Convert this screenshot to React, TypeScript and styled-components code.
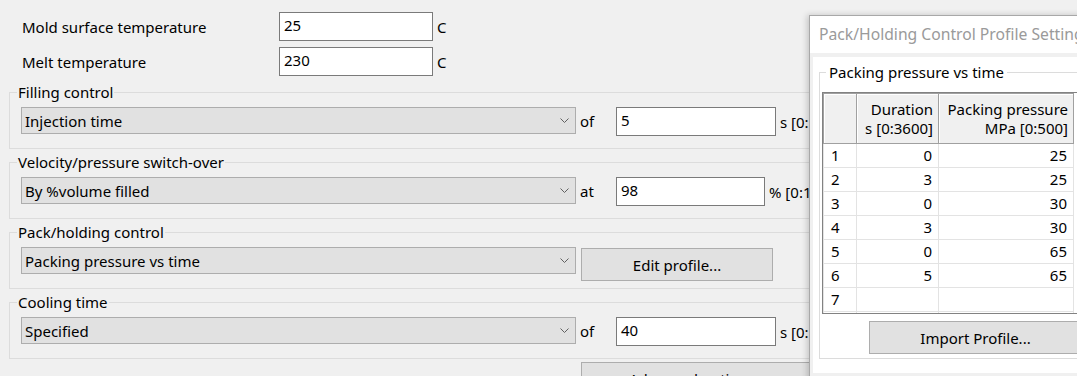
import React from "react";
import styled, {createGlobalStyle} from "styled-components";

const GlobalStyle = createGlobalStyle`
  html, body {
    margin: 0;
    padding: 0;
    background: #f0f0f0;
  }
  body {
    font-family: "Noto Sans", "Open Sans", sans-serif;
    font-size: 15px;
    color: #000;
  }
`;

const Screen = styled.div`
  position: relative;
  width: 1077px;
  height: 376px;
  overflow: hidden;
  background: #f0f0f0;
`;

const Form = styled.div`
  padding: 12px 0 0 9px;
  width: 900px;
`;

const FieldRow = styled.div`
  display: flex;
  align-items: center;
  height: 29px;
  margin-bottom: 6px;
`;

const FieldLabel = styled.div`
  width: 257px;
  padding-left: 13px;
  line-height: 30px;
`;

const TextBox = styled.div<{$w: number}>`
  box-sizing: border-box;
  width: ${(p) => p.$w}px;
  height: 29px;
  background: #fff;
  border: 1px solid #7a7a7a;
  padding: 0 0 0 4px;
  line-height: 24px;
`;

const Unit = styled.div`
  padding-left: 4px;
  line-height: 30px;
  white-space: nowrap;
`;

const GroupBox = styled.div`
  border: 1px solid #dcdcdc;
  padding: 0 0 12px 11px;
  margin-top: 16px;
  & + & {
    margin-top: 13px;
  }
`;

const GroupTitle = styled.div`
  width: fit-content;
  height: 20px;
  margin: -11px 0 5px -4px;
  padding: 0 1px;
  line-height: 21px;
  background: #f0f0f0;
`;

const ControlRow = styled.div`
  display: flex;
  align-items: flex-start;
  height: 29px;
`;

const Combo = styled.div`
  box-sizing: border-box;
  display: flex;
  align-items: center;
  justify-content: space-between;
  width: 555px;
  height: 27px;
  background: #e1e1e1;
  border: 1px solid #adadad;
  padding: 1px 6px 0 3px;
`;

const Chevron = () => (
  <svg width="9" height="6" viewBox="0 0 9 6">
    <path d="M0.5 0.5 L4.5 4.5 L8.5 0.5" fill="none" stroke="#606060" strokeWidth="1" />
  </svg>
);

const Joiner = styled.div`
  width: 36px;
  padding-left: 4px;
  line-height: 28px;
`;

const PushButton = styled.button<{$w: number}>`
  box-sizing: border-box;
  width: ${(p) => p.$w}px;
  height: 33px;
  margin: 1px 0 0 5px;
  background: #e1e1e1;
  border: 1px solid #adadad;
  font: inherit;
  color: #000;
  padding: 0;
`;

const BottomButton = styled(PushButton)`
  display: block;
  margin: 3px 0 0 572px;
`;

const Dialog = styled.div`
  position: absolute;
  left: 809px;
  top: 15px;
  width: 300px;
  height: 380px;
  background: #f0f0f0;
  border: 1px solid #a8a8a8;
  box-shadow: -2px 0 6px rgba(0, 0, 0, 0.18);
`;

const TitleBar = styled.div`
  height: 37px;
  background: #fff;
  color: #9a9a9a;
  padding-left: 9px;
  line-height: 36px;
  font-size: 15.7px;
  white-space: nowrap;
`;

const DialogBody = styled.div`
  padding: 4px 0 0 3px;
`;

const Panel = styled.div`
  background: #fff;
  height: 311px;
  padding: 5px 0 0 6px;
`;

const InnerGroup = styled.div`
  border: 1px solid #dcdcdc;
  padding: 0 0 4px 2px;
  margin-top: 10px;
`;

const InnerTitle = styled(GroupTitle)`
  background: #fff;
  margin: -11px 0 10px 4px;
  padding: 0 3px;
`;

const TableFrame = styled.div`
  box-sizing: border-box;
  height: 222px;
  overflow: hidden;
  border: 1px solid #828282;
  background: #fff;
`;

const Grid = styled.table`
  border-collapse: collapse;
  table-layout: fixed;
  width: 400px;
`;

const HeadCell = styled.th<{$w?: number}>`
  box-sizing: border-box;
  width: ${(p) => (p.$w ? `${p.$w}px` : "auto")};
  height: 48px;
  padding: 0 5px 0 0;
  background: #f0f0f0;
  border: 1px solid #a0a0a0;
  box-shadow: inset 1px 1px 0 #fff;
  font-weight: normal;
  text-align: right;
  line-height: 19px;
  white-space: nowrap;
`;

const BlankHead = styled.th`
  height: 48px;
  background: #fff;
  border: 0;
`;

const Cell = styled.td<{$left?: boolean}>`
  height: 23px;
  padding: 0 ${(p) => (p.$left ? "0 0 7px" : "6px 0 0")};
  border: 1px solid #e3e3e3;
  border-top: 0;
  text-align: ${(p) => (p.$left ? "left" : "right")};
  line-height: 23px;
`;

const FillCell = styled.td`
  border: 0;
`;

const ImportButton = styled(PushButton)`
  display: block;
  width: 213px;
  margin: 7px 0 0 47px;
`;

const rows: [string, string, string][] = [
  ["1", "0", "25"],
  ["2", "3", "25"],
  ["3", "0", "30"],
  ["4", "3", "30"],
  ["5", "0", "65"],
  ["6", "5", "65"],
  ["7", "", ""],
  ["", "", ""],
];

const groups = [
  {title: "Filling control", value: "Injection time", joiner: "of", input: "5", w: 160, unit: "s [0:100]"},
  {title: "Velocity/pressure switch-over", value: "By %volume filled", joiner: "at", input: "98", w: 149, unit: "% [0:100]"},
  {title: "Pack/holding control", value: "Packing pressure vs time", button: "Edit profile..."},
  {title: "Cooling time", value: "Specified", joiner: "of", input: "40", w: 160, unit: "s [0:1000]"},
];

const App: React.FC = () => {
  return (
    <>
      <GlobalStyle />
      <Screen>
        <Form>
          <FieldRow>
            <FieldLabel>Mold surface temperature</FieldLabel>
            <TextBox $w={154}>25</TextBox>
            <Unit>C</Unit>
          </FieldRow>
          <FieldRow>
            <FieldLabel>Melt temperature</FieldLabel>
            <TextBox $w={154}>230</TextBox>
            <Unit>C</Unit>
          </FieldRow>
          {groups.map((g) => (
            <GroupBox key={g.title}>
              <GroupTitle>{g.title}</GroupTitle>
              <ControlRow>
                <Combo>
                  {g.value}
                  <Chevron />
                </Combo>
                {g.button ? (
                  <PushButton $w={192}>{g.button}</PushButton>
                ) : (
                  <>
                    <Joiner>{g.joiner}</Joiner>
                    <TextBox $w={g.w!}>{g.input}</TextBox>
                    <Unit>{g.unit}</Unit>
                  </>
                )}
              </ControlRow>
            </GroupBox>
          ))}
          <BottomButton $w={234}>Advanced options...</BottomButton>
        </Form>

        <Dialog>
          <TitleBar>Pack/Holding Control Profile Settings</TitleBar>
          <DialogBody>
            <Panel>
              <InnerGroup>
                <InnerTitle>Packing pressure vs time</InnerTitle>
                <TableFrame>
                  <Grid>
                    <thead>
                      <tr>
                        <HeadCell $w={33} />
                        <HeadCell $w={82}>
                          Duration
                          <br />s [0:3600]
                        </HeadCell>
                        <HeadCell $w={135}>
                          Packing pressure
                          <br />
                          MPa [0:500]
                        </HeadCell>
                        <BlankHead />
                      </tr>
                    </thead>
                    <tbody>
                      {rows.map(([n, d, p], i) => (
                        <tr key={i}>
                          <Cell $left>{n}</Cell>
                          <Cell>{d}</Cell>
                          <Cell>{p}</Cell>
                          <FillCell />
                        </tr>
                      ))}
                    </tbody>
                  </Grid>
                </TableFrame>
                <ImportButton $w={213}>Import Profile...</ImportButton>
              </InnerGroup>
            </Panel>
          </DialogBody>
        </Dialog>
      </Screen>
    </>
  );
};

export default App;
